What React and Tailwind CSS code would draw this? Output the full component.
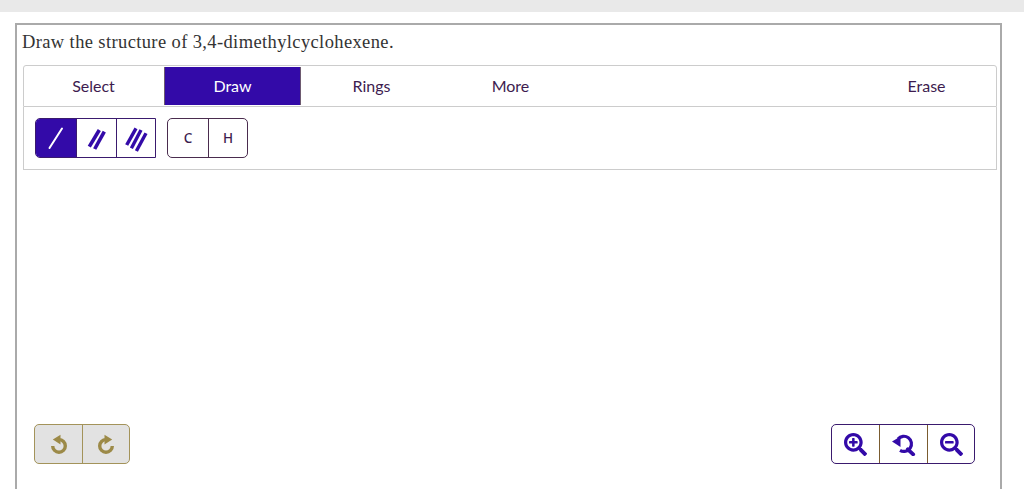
import React from 'react'
import { FaSearchPlus, FaSearchMinus } from 'react-icons/fa'

const Tab = ({ label, active }) => (
  <div
    className={`flex items-center justify-center text-[16px] ${
      active
        ? 'w-[137px] mx-px h-[38px] self-center bg-[#330aa8] text-white border-x border-[#6d5a70]'
        : 'w-[139px] h-full text-[#3d1c4f]'
    }`}
  >
    {label}
  </div>
)

const DoubleBond = () => (
  <svg width="24" height="28" viewBox="0 0 24 28" stroke="#330aa8" strokeWidth="3.6">
    <line x1="4.3" y1="22.7" x2="14.3" y2="6" />
    <line x1="9.7" y1="25" x2="19.3" y2="7.7" />
  </svg>
)

const TripleBond = () => (
  <svg width="24" height="28" viewBox="0 0 24 28" stroke="#330aa8" strokeWidth="3.4">
    <line x1="2.7" y1="21" x2="12" y2="4.3" />
    <line x1="7.4" y1="24.3" x2="17" y2="6" />
    <line x1="12.4" y1="27" x2="22" y2="9.3" />
  </svg>
)

const SingleBond = () => (
  <svg width="24" height="28" viewBox="0 0 24 28">
    <line x1="5.5" y1="24" x2="18" y2="4.5" stroke="#ffffff" strokeWidth="2" strokeLinecap="round" />
  </svg>
)

const UndoIcon = ({ flip }) => (
  <svg width="20" height="20" viewBox="0 0 20 20" className={flip ? '-scale-x-100' : ''} fill="none">
    <path d="M10 5.6 A6.3 6.3 0 1 1 3.7 11.9" stroke="#9c8a48" strokeWidth="3.4" />
    <path d="M11.5 0.8 L11.5 10.4 L3.8 5.6 Z" fill="#9c8a48" />
  </svg>
)

const SearchUndo = () => (
  <svg width="24" height="24" viewBox="0 0 24 24" fill="none" stroke="#330aa8">
    <path d="M6 7 A7.6 7.6 0 1 1 8 18.4" strokeWidth="3.2" />
    <path d="M0 9.5 L8.5 4.5 L8.5 15 Z" fill="#330aa8" strokeWidth="0" />
    <path d="M15.8 17.3 L21.2 22.3" strokeWidth="3.8" strokeLinecap="round" />
  </svg>
)

export default function App() {
  return (
    <div className="h-[489px] overflow-hidden bg-white font-['Lato',sans-serif]">
      <div className="h-3 bg-[#e9e9e9]" />
      <div className="mt-[11px] ml-[15px] w-[987px] h-[480px] border-2 border-[#aaaaaa] pl-[6px] pr-[3px]">
        <h1 className="h-[40px] pt-[3px] -ml-px text-[18.5px] leading-[28px] tracking-[0.38px] text-[#333] font-normal font-['Liberation_Serif',serif]">
          Draw the structure of 3,4-dimethylcyclohexene.
        </h1>

        <div className="w-[974px] h-[42px] border border-[#cccccc] rounded-t-[3px] flex">
          <Tab label="Select" />
          <Tab label="Draw" active />
          <Tab label="Rings" />
          <Tab label="More" />
          <div className="flex-1" />
          <Tab label="Erase" />
        </div>

        <div className="w-[974px] h-[63px] border border-t-0 border-[#cccccc] flex gap-[11px] pt-[11px] pl-[11px]">
          <div className="flex h-[40px] border border-[#3a1a6e] rounded-l-[5px] overflow-hidden">
            <div className="w-[40px] bg-[#330aa8] flex items-center justify-center">
              <SingleBond />
            </div>
            <div className="w-[40px] border-l border-[#3a1a6e] flex items-center justify-center">
              <DoubleBond />
            </div>
            <div className="w-[39px] border-l border-[#3a1a6e] flex items-center justify-center">
              <TripleBond />
            </div>
          </div>
          <div className="flex h-[40px] border border-[#4a2c4e] rounded-[5px] text-[#3d1c4f] text-[13.5px] font-medium font-['Noto_Sans',sans-serif]">
            <div className="w-[40px] flex items-center justify-center">C</div>
            <div className="w-[39px] border-l border-[#4a2c4e] flex items-center justify-center">H</div>
          </div>
        </div>

        <div className="h-[254px]" />

        <div className="flex justify-between pl-[11px] pr-[22px]">
          <div className="flex h-[40px] border border-[#a3935a] rounded-[5px] bg-[#e2e2e2]">
            <div className="w-[47px] flex items-center justify-center">
              <UndoIcon />
            </div>
            <div className="w-[47px] border-l border-[#a3935a] flex items-center justify-center">
              <UndoIcon flip />
            </div>
          </div>
          <div className="flex h-[40px] border border-[#3a1a6e] rounded-[5px] text-[#330aa8]">
            <div className="w-[47px] flex items-center justify-center">
              <FaSearchPlus size={23} />
            </div>
            <div className="w-[48px] border-l border-[#7a5c30] flex items-center justify-center">
              <SearchUndo />
            </div>
            <div className="w-[47px] border-l border-[#7a5c30] flex items-center justify-center">
              <FaSearchMinus size={23} />
            </div>
          </div>
        </div>
      </div>
    </div>
  )
}
